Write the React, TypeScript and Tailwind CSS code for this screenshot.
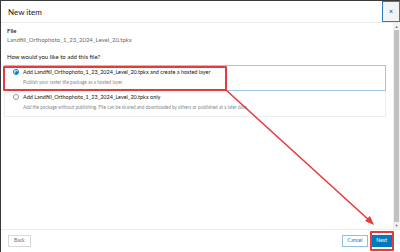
import React from "react";

const options = [
   {
      id: "hosted",
      title: "Add Landfill_Orthophoto_1_23_2024_Level_20.tpkx and create a hosted layer",
      desc: "Publish your raster tile package as a hosted layer.",
      checked: true,
   },
   {
      id: "only",
      title: "Add Landfill_Orthophoto_1_23_2024_Level_20.tpkx only",
      desc: "Add tile package without publishing. File can be shared and downloaded by others or published at a later date.",
      checked: false,
   },
];

const App = () => {
   return (
      <div
         className="relative w-[400px] h-[252px] bg-white border-t border-l border-[#3a3a3a] flex flex-col overflow-hidden text-[#151515]"
         style={{ fontFamily: "Lato, 'Noto Sans', sans-serif" }}
      >
         {/* header */}
         <div className="h-[22px] flex items-stretch justify-between border-b border-[#ececec]">
            <h1 className="pl-[7px] flex items-center text-[8px]">New item</h1>
            <button className="w-[18px] bg-[#f3f3f3] border border-[#2d7bbf] flex items-center justify-center text-[7px] leading-none text-[#333]">
               ×
            </button>
         </div>

         {/* body */}
         <div className="flex-1 flex min-h-0">
            <div className="flex-1 pl-[6px] pr-[7px] pt-[3px] overflow-hidden">
               <div className="text-[6px] leading-[9px] font-semibold">File</div>
               <div className="text-[6px] leading-[10px] text-[#6b6b6b]">Landfill_Orthophoto_1_23_2024_Level_20.tpkx</div>
               <div className="text-[6px] leading-[9px] mt-[7px]">How would you like to add this file?</div>
               <ul className="mt-[4px] -ml-[3px]">
                  {options.map((o) => (
                     <li
                        key={o.id}
                        className={`h-[26px] pl-[8px] pt-[2px] border ${
                           o.checked ? "border-[#9cc7e6]" : "border-[#eeeeee] border-t-0"
                        }`}
                     >
                        <div className="flex items-center gap-[4px] h-[8px]">
                           <span
                              className={`w-[6px] h-[6px] rounded-full border flex items-center justify-center ${
                                 o.checked ? "border-[#0079c1]" : "border-[#9a9a9a]"
                              }`}
                           >
                              {o.checked && <span className="w-[3px] h-[3px] rounded-full bg-[#0079c1]" />}
                           </span>
                           <span className="text-[5.5px] leading-[8px] whitespace-nowrap">{o.title}</span>
                        </div>
                        <div className="pl-[10px] mt-[3px] text-[4.7px] leading-[6px] text-[#8a8a8a] whitespace-nowrap">{o.desc}</div>
                     </li>
                  ))}
               </ul>
            </div>
            {/* scrollbar */}
            <div className="w-[7px] bg-[#f1f1f1] flex flex-col items-center">
               <span className="text-[4px] leading-[7px] text-[#777]">▲</span>
               <div className="flex-1 w-[5px] bg-[#c1c1c1]" />
               <span className="text-[4px] leading-[7px] text-[#777]">▼</span>
            </div>
         </div>

         {/* footer */}
         <div className="h-[23px] border-t border-[#ececec] flex items-center justify-between pl-[7px] pr-[8px]">
            <button className="h-[12px] px-[5px] border border-[#d8d8d8] text-[5px] text-[#6b6b6b]">Back</button>
            <div className="flex items-center gap-[3px]">
               <button className="h-[12px] px-[5px] border border-[#8fc0e3] text-[5px] text-[#0079c1]">Cancel</button>
               <button className="h-[12px] px-[5px] bg-[#0079c1] text-[5px] text-white">Next</button>
            </div>
         </div>

         {/* annotations */}
         <div className="absolute left-[2px] top-[65px] w-[224px] h-[25px] border-2 border-[#e8393b] rounded-[1px]" />
         <div className="absolute left-[369px] top-[230px] w-[24px] h-[20px] border-2 border-[#e8393b] rounded-[1px]" />
         <svg className="absolute inset-0 pointer-events-none" width="400" height="252">
            <line x1="225" y1="89" x2="369" y2="220" stroke="#e8393b" strokeWidth="1.6" />
            <polygon points="373,224 364,220 369,215" fill="#e8393b" />
         </svg>
      </div>
   );
};

export default App;
